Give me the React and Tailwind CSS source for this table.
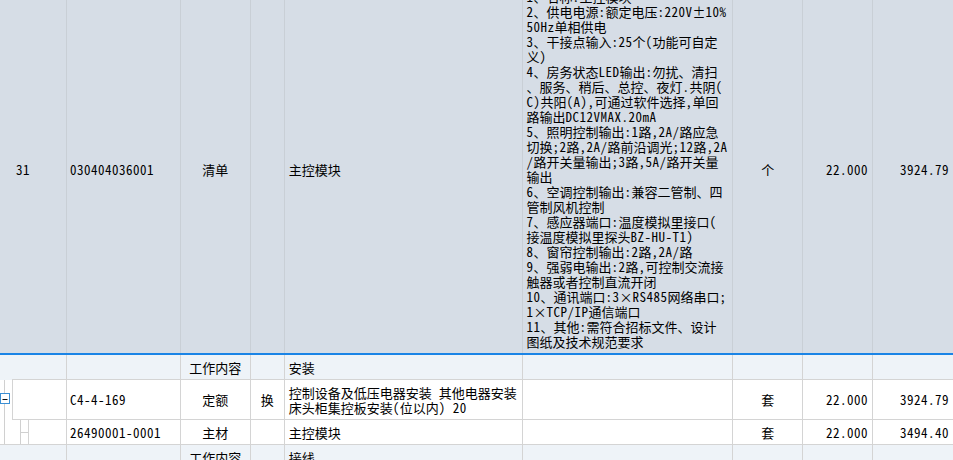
import React from 'react';

// 清单描述，按原图的折行一行一行写出
const desc = [
  '1、名称:主控模块',
  '2、供电电源:额定电压:220V±10%',
  '50Hz单相供电',
  '3、干接点输入:25个(功能可自定',
  '义)',
  '4、房务状态LED输出:勿扰、清扫',
  '、服务、稍后、总控、夜灯.共阴(',
  'C)共阳(A),可通过软件选择,单回',
  '路输出DC12VMAX.20mA',
  '5、照明控制输出:1路,2A/路应急',
  '切换;2路,2A/路前沿调光;12路,2A',
  '/路开关量输出;3路,5A/路开关量',
  '输出',
  '6、空调控制输出:兼容二管制、四',
  '管制风机控制',
  '7、感应器端口:温度模拟里接口(',
  '接温度模拟里探头BZ-HU-T1)',
  '8、窗帘控制输出:2路,2A/路',
  '9、强弱电输出:2路,可控制交流接',
  '触器或者控制直流开闭',
  '10、通讯端口:3×RS485网络串口;',
  '1×TCP/IP通信端口',
  '11、其他:需符合招标文件、设计',
  '图纸及技术规范要求',
];

// 半角字符宽一点，贴近宋体的 7px 西文
function T({ s }) {
  return s.split(/([\x20-\x7e]+)/).map((p, i) =>
    /^[\x20-\x7e]+$/.test(p) ? (
      <span key={i} className="tracking-[0.5px]">{p}</span>
    ) : (
      <React.Fragment key={i}>{p}</React.Fragment>
    )
  );
}

function Row({ bg, h, children }) {
  return <div className={`flex ${bg} ${h}`}>{children}</div>;
}

function SubRow({ light, h, first, code, type, mark, name, unit, qty, price, multi }) {
  const bg = light ? 'bg-[#eef3f8]' : 'bg-white';
  const c = 'border-r border-b border-[#d4d4d4] flex items-center whitespace-nowrap';
  return (
    <div className={`flex ${bg} ${h}`}>
      {first}
      <div className={`${c} w-[114px] pl-[3px]`}>{code && <T s={code} />}</div>
      <div className={`${c} w-[70px] justify-center`}>{type}</div>
      <div className={`${c} w-[34px] justify-center`}>{mark}</div>
      <div className={`${c} w-[239px] pl-[4px]`}>
        {multi ? (
          <div className="leading-[15px]">
            {multi.map((l) => (
              <div key={l}><T s={l} /></div>
            ))}
          </div>
        ) : (
          name && <T s={name} />
        )}
      </div>
      <div className={`${c} w-[210px]`} />
      <div className={`${c} w-[70px] justify-center`}>{unit}</div>
      <div className={`${c} w-[70px] justify-end pr-[4px]`}>{qty && <T s={qty} />}</div>
      <div className={`border-b border-[#d4d4d4] flex items-center w-[80px] justify-end pr-[4px]`}>
        {price && <T s={price} />}
      </div>
    </div>
  );
}

export default function App() {
  const tc = 'border-r border-[#c9cfd6] flex items-center whitespace-nowrap';
  return (
    <div className="w-[953px] h-[460px] overflow-hidden bg-white text-black text-[13px] leading-[15px] font-['Noto_Sans_Mono_CJK_SC','Noto_Sans_CJK_SC',monospace]">
      <div className="-mt-[15px]">
        <Row bg="bg-[#d6dde6]" h="h-[368px]">
          <div className={`${tc} w-[67px] pl-[16px]`}><T s="31" /></div>
          <div className={`${tc} w-[114px] pl-[3px]`}><T s="030404036001" /></div>
          <div className={`${tc} w-[70px] justify-center`}>清单</div>
          <div className={`${tc} w-[34px]`} />
          <div className={`${tc} w-[239px] pl-[4px]`}>主控模块</div>
          <div className="border-r border-[#c9cfd6] w-[210px] pl-[3px] pt-[4px] whitespace-nowrap">
            {desc.map((l) => (
              <div key={l}><T s={l} /></div>
            ))}
          </div>
          <div className={`${tc} w-[70px] justify-center`}>个</div>
          <div className={`${tc} w-[70px] justify-end pr-[4px]`}><T s="22.000" /></div>
          <div className="flex items-center w-[80px] justify-end pr-[4px]"><T s="3924.79" /></div>
        </Row>
        <div className="h-[2px] bg-[#1a84e6]" />

        <SubRow
          light
          h="h-[25px]"
          first={
            <div className="w-[67px] flex border-r border-[#d4d4d4]">
              <div className="w-[12px]" />
              <div className="flex-1 border-b border-[#d4d4d4]" />
            </div>
          }
          type="工作内容"
          name="安装"
        />

        <SubRow
          h="h-[40px]"
          first={
            <div className="w-[67px] flex border-r border-[#d4d4d4]">
              <svg width="12" height="40" className="shrink-0">
                <line x1="4.5" y1="0" x2="4.5" y2="40" stroke="#d0d0d0" />
                <rect x="0.5" y="13.5" width="9" height="10" fill="#fff" stroke="#3b8fd4" />
                <line x1="2.5" y1="19.5" x2="7.5" y2="19.5" stroke="#111" />
              </svg>
              <div className="flex-1 border-l border-b border-[#d4d4d4]" />
            </div>
          }
          code="C4-4-169"
          type="定额"
          mark="换"
          multi={['控制设备及低压电器安装 其他电器安装', '床头柜集控板安装(位以内) 20']}
          unit="套"
          qty="22.000"
          price="3924.79"
        />

        <SubRow
          h="h-[25px]"
          first={
            <div className="w-[67px] flex border-r border-b border-[#d4d4d4]">
              <svg width="28" height="24" className="shrink-0">
                <line x1="4.5" y1="0" x2="4.5" y2="24" stroke="#d0d0d0" />
                <line x1="20.5" y1="0" x2="20.5" y2="24" stroke="#d0d0d0" />
                <line x1="20.5" y1="12.5" x2="28" y2="12.5" stroke="#d0d0d0" />
              </svg>
              <div className="flex-1 border-l border-[#d4d4d4]" />
            </div>
          }
          code="26490001-0001"
          type="主材"
          name="主控模块"
          unit="套"
          qty="22.000"
          price="3494.40"
        />

        <SubRow
          light
          h="h-[25px]"
          first={<div className="w-[67px] border-r border-b border-[#d4d4d4]" />}
          type="工作内容"
          name="接线"
        />
      </div>
    </div>
  );
}
